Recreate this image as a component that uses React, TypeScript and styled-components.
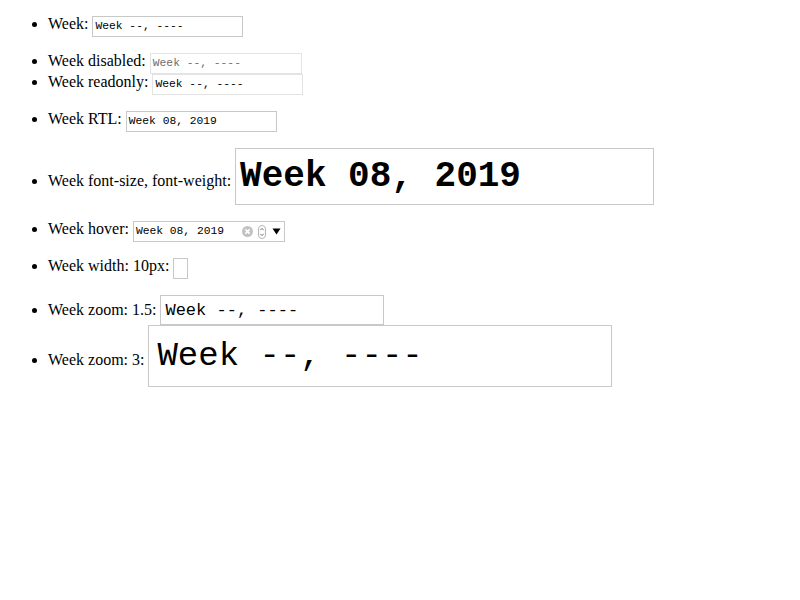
import React from 'react';
import styled, { createGlobalStyle } from 'styled-components';

const GlobalStyle = createGlobalStyle`
  body {
    margin: 0;
    background: #ffffff;
    color: #000000;
    font-family: "Liberation Serif", "Times New Roman", serif;
    font-size: 16px;
  }
`;

const Page = styled.div`
  display: flow-root;
  padding: 0 8px;
`;

const List = styled.ul`
  margin: 16px 0;
  padding-left: 40px;
`;

const Item = styled.li`
  line-height: 14px;
`;

type FieldProps = {
  $w: number;
  $h: number;
  $fs: number;
  $pad?: number;
  $bold?: boolean;
  $tone?: 'normal' | 'disabled' | 'readonly';
};

const Field = styled.span<FieldProps>`
  display: inline-flex;
  align-items: center;
  box-sizing: border-box;
  width: ${(p) => p.$w}px;
  height: ${(p) => p.$h}px;
  padding: 0 ${(p) => p.$pad ?? 2}px;
  border: 1px solid ${(p) => (p.$tone && p.$tone !== 'normal' ? '#e3e3e3' : '#c8c8c8')};
  background: #ffffff;
  color: ${(p) => (p.$tone === 'disabled' ? '#6d6d6d' : '#000000')};
  font-family: "Liberation Mono", "Courier New", monospace;
  font-size: ${(p) => p.$fs}px;
  font-weight: ${(p) => (p.$bold ? 700 : 400)};
  line-height: 1;
  overflow: hidden;
  white-space: pre;
  vertical-align: baseline;
`;

const Value = styled.span<{ $hidden?: boolean }>`
  flex: 1;
  visibility: ${(p) => (p.$hidden ? 'hidden' : 'visible')};
`;

const Controls = styled.span`
  display: inline-flex;
  align-items: center;
  gap: 5px;
  margin-right: 1px;
`;

const ClearButton = styled.span`
  display: inline-flex;
  width: 11px;
  height: 11px;
`;

const SpinButton = styled.span`
  display: inline-flex;
  width: 8px;
  height: 14px;
`;

const DropArrow = styled.span`
  display: inline-flex;
  width: 9px;
  height: 7px;
  margin-left: 1px;
`;

const App: React.FC = () => {
  return (
    <Page>
      <GlobalStyle />
      <List>
        <Item>
          Week: <Field $w={151} $h={21} $fs={11.3}><Value>Week --, ----</Value></Field>
        </Item>
      </List>
      <List>
        <Item>
          Week disabled: <Field $w={152} $h={21} $fs={11.3} $tone="disabled"><Value>Week --, ----</Value></Field>
        </Item>
        <Item>
          Week readonly: <Field $w={151} $h={21} $fs={11.3} $tone="readonly"><Value>Week --, ----</Value></Field>
        </Item>
      </List>
      <List>
        <Item>
          Week RTL: <Field $w={151} $h={21} $fs={11.3}><Value>Week 08, 2019</Value></Field>
        </Item>
      </List>
      <List>
        <Item>
          Week font-size, font-weight: <Field $w={419} $h={57} $fs={36} $pad={4} $bold><Value>Week 08, 2019</Value></Field>
        </Item>
      </List>
      <List>
        <Item>
          Week hover:{' '}
          <Field $w={152} $h={21} $fs={11.3}>
            <Value>Week 08, 2019</Value>
            <Controls>
              <ClearButton>
                <svg width="11" height="11" viewBox="0 0 11 11">
                  <circle cx="5.5" cy="5.5" r="5.5" fill="#c2c2c2" />
                  <path d="M3.4 3.4 L7.6 7.6 M7.6 3.4 L3.4 7.6" stroke="#ffffff" strokeWidth="1.5" />
                </svg>
              </ClearButton>
              <SpinButton>
                <svg width="8" height="14" viewBox="0 0 8 14">
                  <rect x="0.5" y="0.5" width="7" height="13" rx="3.5" fill="#ffffff" stroke="#b5b5b5" />
                  <path d="M2.3 5.2 L4 3.4 L5.7 5.2" fill="none" stroke="#606060" strokeWidth="0.9" />
                  <path d="M2.3 8.8 L4 10.6 L5.7 8.8" fill="none" stroke="#606060" strokeWidth="0.9" />
                </svg>
              </SpinButton>
              <DropArrow>
                <svg width="9" height="7" viewBox="0 0 9 7">
                  <path d="M0.5 0.5 H8.5 L4.5 6.5 Z" fill="#000000" />
                </svg>
              </DropArrow>
            </Controls>
          </Field>
        </Item>
      </List>
      <List>
        <Item>
          Week width: 10px: <Field $w={15} $h={21} $fs={11.3}><Value $hidden>Week --, ----</Value></Field>
        </Item>
      </List>
      <List>
        <Item>
          Week zoom: 1.5: <Field $w={224} $h={30} $fs={17} $pad={4}><Value>Week --, ----</Value></Field>
        </Item>
        <Item>
          Week zoom: 3: <Field $w={464} $h={62} $fs={34} $pad={8}><Value>Week --, ----</Value></Field>
        </Item>
      </List>
    </Page>
  );
};

export default App;
